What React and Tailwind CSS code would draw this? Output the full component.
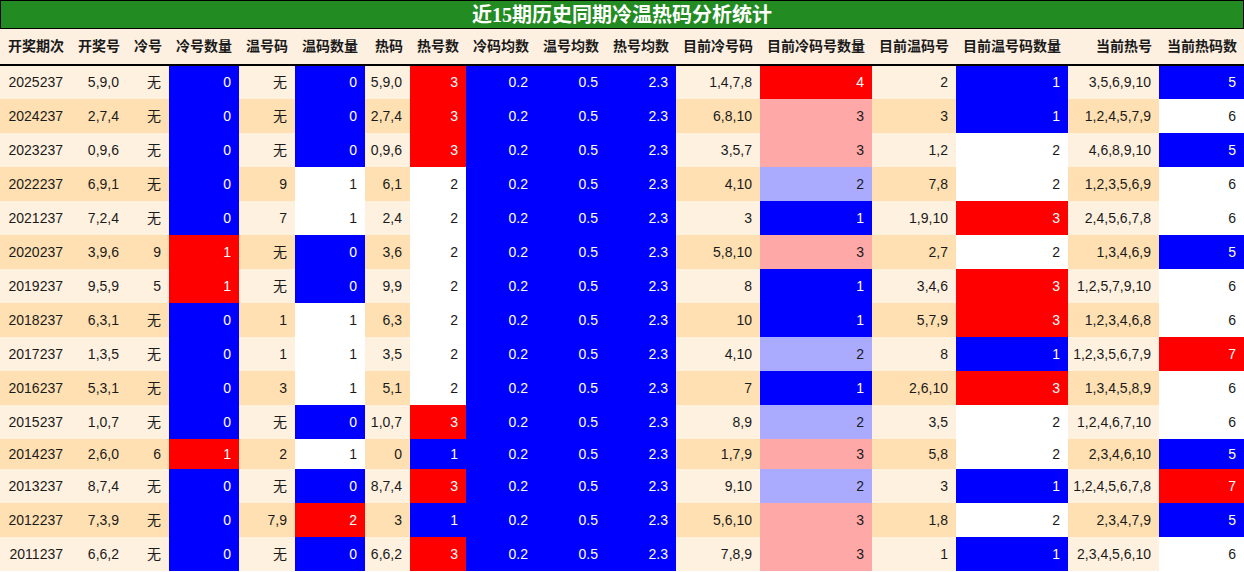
const headers = [
  '开奖期次', '开奖号', '冷号', '冷号数量', '温号码', '温码数量', '热码', '热号数',
  '冷码均数', '温号均数', '热号均数', '目前冷号码', '目前冷码号数量', '目前温码号',
  '目前温号码数量', '当前热号', '当前热码数',
];

const widths = [71, 56, 42, 70, 56, 70, 45, 56, 70, 70, 70, 84, 112, 84, 112, 91, 85];

// period, draw, cold, coldN, warm, warmN, hot, hotN, curCold, curColdN, curWarm, curWarmN, curHot, curHotN
const rows = [
  ['2025237', '5,9,0', '无', 0, '无', 0, '5,9,0', 3, '1,4,7,8', 4, '2', 1, '3,5,6,9,10', 5],
  ['2024237', '2,7,4', '无', 0, '无', 0, '2,7,4', 3, '6,8,10', 3, '3', 1, '1,2,4,5,7,9', 6],
  ['2023237', '0,9,6', '无', 0, '无', 0, '0,9,6', 3, '3,5,7', 3, '1,2', 2, '4,6,8,9,10', 5],
  ['2022237', '6,9,1', '无', 0, '9', 1, '6,1', 2, '4,10', 2, '7,8', 2, '1,2,3,5,6,9', 6],
  ['2021237', '7,2,4', '无', 0, '7', 1, '2,4', 2, '3', 1, '1,9,10', 3, '2,4,5,6,7,8', 6],
  ['2020237', '3,9,6', '9', 1, '无', 0, '3,6', 2, '5,8,10', 3, '2,7', 2, '1,3,4,6,9', 5],
  ['2019237', '9,5,9', '5', 1, '无', 0, '9,9', 2, '8', 1, '3,4,6', 3, '1,2,5,7,9,10', 6],
  ['2018237', '6,3,1', '无', 0, '1', 1, '6,3', 2, '10', 1, '5,7,9', 3, '1,2,3,4,6,8', 6],
  ['2017237', '1,3,5', '无', 0, '1', 1, '3,5', 2, '4,10', 2, '8', 1, '1,2,3,5,6,7,9', 7],
  ['2016237', '5,3,1', '无', 0, '3', 1, '5,1', 2, '7', 1, '2,6,10', 3, '1,3,4,5,8,9', 6],
  ['2015237', '1,0,7', '无', 0, '无', 0, '1,0,7', 3, '8,9', 2, '3,5', 2, '1,2,4,6,7,10', 6],
  ['2014237', '2,6,0', '6', 1, '2', 1, '0', 1, '1,7,9', 3, '5,8', 2, '2,3,4,6,10', 5],
  ['2013237', '8,7,4', '无', 0, '无', 0, '8,7,4', 3, '9,10', 2, '3', 1, '1,2,4,5,6,7,8', 7],
  ['2012237', '7,3,9', '无', 0, '7,9', 2, '3', 1, '5,6,10', 3, '1,8', 2, '2,3,4,7,9', 5],
  ['2011237', '6,6,2', '无', 0, '无', 0, '6,6,2', 3, '7,8,9', 3, '1', 1, '2,3,4,5,6,10', 6],
];

const BLUE = 'bg-[#0000ff] text-white';
const RED = 'bg-[#ff0000] text-white';
const WHITE = 'bg-white text-[#1a1a1a]';
const PINK = 'bg-[#ffa8a8] text-[#1a1a1a]';
const LBLUE = 'bg-[#aaaaff] text-[#1a1a1a]';

const coldNColor = (n) => (n === 0 ? BLUE : RED);
const warmNColor = (n) => (n === 0 ? BLUE : n === 1 ? WHITE : RED);
const hotNColor = (n) => (n === 3 ? RED : n === 2 ? WHITE : BLUE);
const curColdColor = (n) => (n === 4 ? RED : n === 3 ? PINK : n === 2 ? LBLUE : BLUE);
const curWarmColor = (n) => (n === 1 ? BLUE : n === 2 ? WHITE : RED);
const curHotColor = (n) => (n === 5 ? BLUE : n === 6 ? WHITE : RED);

export default function App() {
  return (
    <div className="w-[1244px] h-[572px] overflow-hidden bg-white font-['Liberation_Sans','Noto_Sans_CJK_SC',sans-serif]">
      {/* Title */}
      <div className="h-[29px] bg-[#228b22] border border-black flex items-center justify-center">
        <span className="text-white font-bold text-[20px] leading-none font-['Liberation_Serif','Noto_Sans_CJK_SC',serif]">
          近15期历史同期冷温热码分析统计
        </span>
      </div>

      <table className="table-fixed border-collapse w-[1244px] text-[14px] text-[#1a1a1a]">
        <colgroup>
          {widths.map((w, i) => (
            <col key={i} style={{ width: w }} />
          ))}
        </colgroup>
        <thead>
          <tr className="h-[36px] bg-[#fdf0e1] border-b-2 border-black">
            {headers.map((h) => (
              <th key={h} className="p-0 pr-[7px] text-right font-bold whitespace-nowrap">
                {h}
              </th>
            ))}
          </tr>
        </thead>
        <tbody>
          {rows.map((r, i) => {
            const rowBg = i % 2 === 0 ? 'bg-[#fff1e0]' : 'bg-[#ffe0b2]';
            const hasWu = r[2] === '无' || r[4] === '无';
            const cells = [
              [r[0], ''],
              [r[1], ''],
              [r[2], ''],
              [r[3], coldNColor(r[3])],
              [r[4], ''],
              [r[5], warmNColor(r[5])],
              [r[6], ''],
              [r[7], hotNColor(r[7])],
              ['0.2', BLUE],
              ['0.5', BLUE],
              ['2.3', BLUE],
              [r[8], ''],
              [r[9], curColdColor(r[9])],
              [r[10], ''],
              [r[11], curWarmColor(r[11])],
              [r[12], ''],
              [r[13], curHotColor(r[13])],
            ];
            return (
              <tr key={r[0]} className={`${rowBg} ${hasWu ? 'h-[34px]' : 'h-[30px]'}`}>
                {cells.map(([v, cls], j) => (
                  <td key={j} className={`p-0 pr-[8px] text-right whitespace-nowrap ${cls}`}>
                    {v}
                  </td>
                ))}
              </tr>
            );
          })}
        </tbody>
      </table>
    </div>
  );
}
